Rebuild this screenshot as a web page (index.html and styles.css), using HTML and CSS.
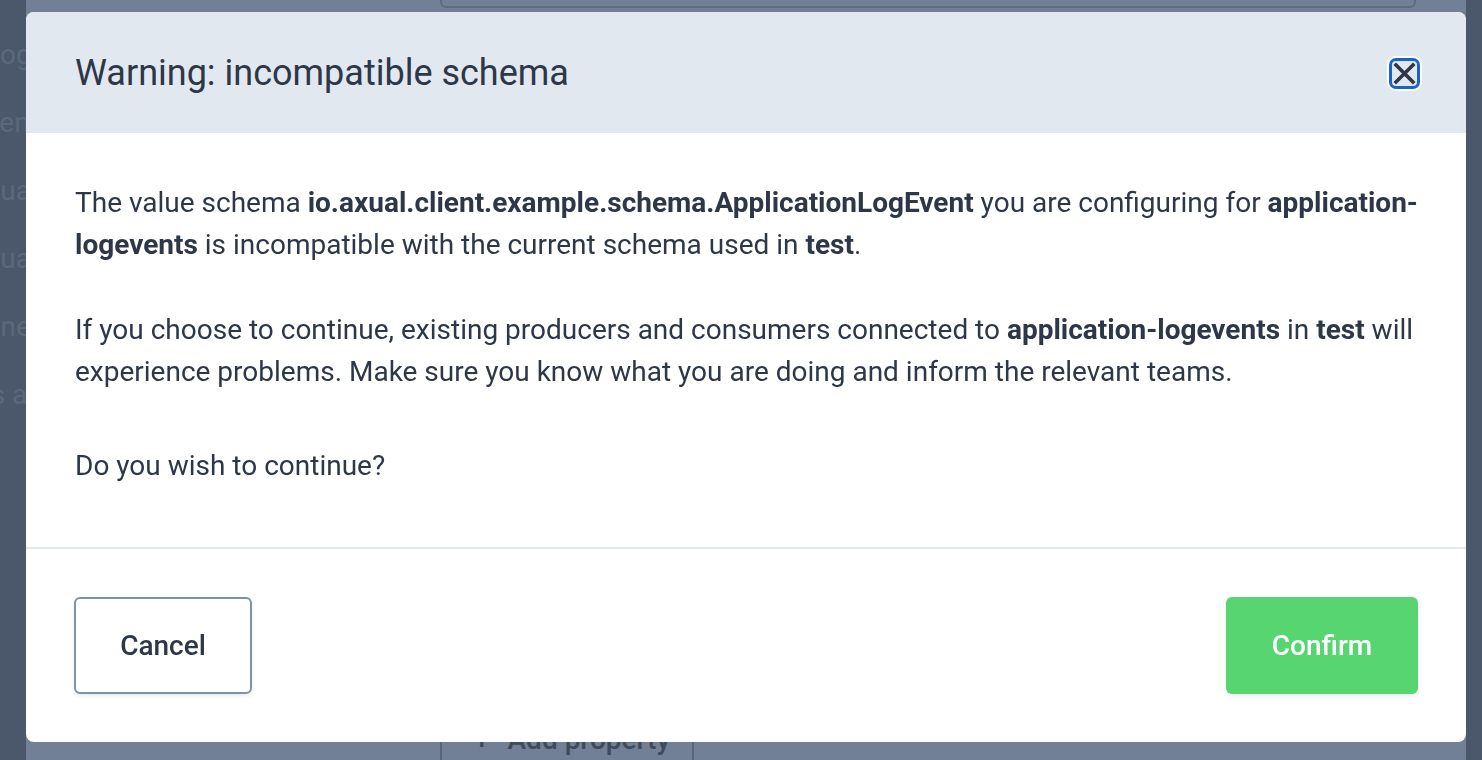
FILE: index.html
```html
<!DOCTYPE html>
<html lang="en">
<head>
    <meta charset="UTF-8">
    <meta name="viewport" content="width=device-width, initial-scale=1.0">
    <title>Incompatible schema</title>
    <link rel="stylesheet" href="styles.css">
</head>
<body>
    <div class="page">
        <nav class="sidebar">
            <div class="nav-item nav-logs">Logs</div>
            <div class="nav-item nav-tenants">Tenants</div>
            <div class="nav-item nav-quality">Quality</div>
            <div class="nav-item nav-quantity">Quantity</div>
            <div class="nav-item nav-zones">Zones</div>
            <div class="nav-item nav-streams">Streams and apps</div>
        </nav>
        <main class="main">
            <div class="field-box"></div>
            <div class="spacer"></div>
            <div class="add-row">
                <div class="add-btn"><span class="plus">+</span>Add property</div>
            </div>
        </main>
        <div class="rightbar"></div>
    </div>

    <div class="overlay">
        <div class="modal">
            <div class="modal-header">
                <h2 class="modal-title">Warning: incompatible schema</h2>
                <button class="close-btn" aria-label="Close">
                    <svg width="25" height="25" viewBox="0 0 25 25">
                        <path d="M4 4 L21 21 M21 4 L4 21" stroke="#2d3748" stroke-width="3.6" stroke-linecap="square"/>
                    </svg>
                </button>
            </div>
            <div class="modal-body">
                <p>The value schema <strong>io.axual.client.example.schema.ApplicationLogEvent</strong> you are configuring for <strong>application-logevents</strong> is incompatible with the current schema used in <strong>test</strong>.</p>
                <p>If you choose to continue, existing producers and consumers connected to <strong>application-logevents</strong> in <strong>test</strong> will experience problems. Make sure you know what you are doing and inform the relevant teams.</p>
                <p class="question">Do you wish to continue?</p>
            </div>
            <div class="modal-footer">
                <button class="btn btn-cancel">Cancel</button>
                <button class="btn btn-confirm">Confirm</button>
            </div>
        </div>
    </div>
</body>
</html>
```

FILE: styles.css
```css
html, body {
    margin: 0;
    height: 100%;
    overflow: hidden;
}
body {
    font-family: Roboto, "Liberation Sans", Arial, sans-serif;
    color: #2d3748;
}
.page {
    display: flex;
    height: 100%;
    background-color: #718096;
}
.sidebar {
    width: 26px;
    flex: none;
    background-color: #4b586b;
    padding-top: 38px;
    overflow: hidden;
    white-space: nowrap;
}
.nav-item {
    height: 68px;
    font-size: 28px;
    color: #5b687b;
}
.nav-logs { margin-left: -15px; }
.nav-tenants { margin-left: -16px; }
.nav-quality { margin-left: -19px; }
.nav-quantity { margin-left: -19px; }
.nav-zones { margin-left: -32px; }
.nav-streams { margin-left: -99px; }
.main {
    flex: 1;
    display: flex;
    flex-direction: column;
    padding-left: 414px;
    padding-right: 50px;
}
.field-box {
    height: 40px;
    margin-top: -36px;
    border: 2px solid #606c7e;
    border-radius: 6px;
}
.spacer {
    flex: 1;
}
.add-row {
    height: 40px;
    margin-bottom: -10px;
}
.add-btn {
    display: inline-block;
    width: 254px;
    height: 48px;
    border-left: 2px solid #5a6678;
    border-right: 2px solid #5a6678;
    box-sizing: border-box;
    font-size: 28px;
    font-weight: 500;
    color: #3f4a5a;
    padding-left: 32px;
    line-height: 20px;
}
.plus {
    margin-right: 18px;
}
.rightbar {
    width: 16px;
    flex: none;
    background-color: #4b586b;
}

/* modal over the page */
.overlay {
    position: fixed;
    top: 0;
    left: 0;
    right: 0;
    bottom: 0;
    padding: 12px 16px 18px 26px;
    box-sizing: border-box;
}
.modal {
    background-color: #fff;
    border-radius: 8px;
    overflow: hidden;
    height: 730px;
    display: flex;
    flex-direction: column;
}
.modal-header {
    background-color: #e2e8f0;
    height: 121px;
    flex: none;
    padding: 0 46px 0 49px;
    display: flex;
    align-items: center;
    justify-content: space-between;
}
.modal-title {
    margin: 0;
    font-size: 36px;
    font-weight: 400;
    color: #2d3748;
}
.close-btn {
    width: 31px;
    height: 31px;
    padding: 0;
    border: 3px solid #1a63cf;
    border-radius: 7px;
    background-color: #e2e8f0;
    box-shadow: 0 0 0 2px #fff;
    display: flex;
    align-items: center;
    justify-content: center;
    margin-top: 2px;
}
.modal-body {
    padding: 49px 46px 60px 49px;
    font-size: 28px;
    line-height: 42px;
    border-bottom: 2px solid #e2e8f0;
}
.modal-body p {
    margin: 0 0 43px;
}
.modal-body p.question {
    margin: 52px 0 0;
}
.modal-body strong {
    font-weight: 700;
    color: #2d3748;
}
.modal-footer {
    padding: 48px;
    display: flex;
    justify-content: space-between;
    align-items: center;
}
.btn {
    font-family: Roboto, "Liberation Sans", Arial, sans-serif;
    font-size: 28px;
    font-weight: 500;
    height: 97px;
    padding: 0;
    border-radius: 6px;
    cursor: pointer;
}
.btn-cancel {
    width: 178px;
    background-color: #fff;
    color: #2d3748;
    border: 2px solid #8090a5;
    box-shadow: 0 2px 4px rgba(0, 0, 0, 0.08);
}
.btn-confirm {
    width: 192px;
    background-color: #56d571;
    color: #fff;
    border: none;
    box-shadow: 0 2px 4px rgba(0, 0, 0, 0.08);
}
```
